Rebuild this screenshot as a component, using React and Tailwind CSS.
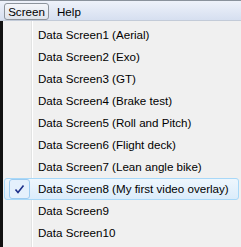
import React from "react"

const items = [
  "Data Screen1 (Aerial)",
  "Data Screen2 (Exo)",
  "Data Screen3 (GT)",
  "Data Screen4 (Brake test)",
  "Data Screen5 (Roll and Pitch)",
  "Data Screen6 (Flight deck)",
  "Data Screen7 (Lean angle bike)",
  "Data Screen8 (My first video overlay)",
  "Data Screen9",
  "Data Screen10",
]

function Check() {
  return (
    <svg width="11" height="11" viewBox="0 0 11 11">
      <path d="M1.5 5.5 L4 8.5 L9.5 1.5" fill="none" stroke="#1c2f8a" strokeWidth="1.6" />
    </svg>
  )
}

export default function App() {
  return (
    <div
      className="w-[241px] h-[247px] overflow-hidden bg-[#f0f0f0] text-[11.6px] text-black"
      style={{ fontFamily: '"Liberation Sans", Arial, sans-serif' }}
    >
      {/* menu bar */}
      <div className="h-[21px] border-t border-t-[#8a929c] border-b border-b-[#c3cbd8] bg-gradient-to-b from-[#eef2fa] to-[#d6dff0] flex items-start pl-[4px] pt-[2px]">
        <div className="h-[17px] w-[45px] rounded-[3px] border border-[#8d949c] bg-gradient-to-b from-[#f4f6fa] to-[#dfe4ec] flex items-center justify-center leading-none">
          Screen
        </div>
        <div className="h-[17px] px-[8px] flex items-center leading-none">Help</div>
      </div>

      <div className="flex h-[226px]">
        <div className="w-[3px] bg-[#111]" />
        <div className="relative flex-1 pt-[3px]">
          <div className="absolute left-[28px] top-0 bottom-0 w-[2px] border-l border-l-[#e2e3e3] border-r border-r-white" />
          {items.map((label, i) => {
            const on = i === 7
            return (
              <div
                key={label}
                className={
                  "relative h-[22px] ml-[1px] mr-[2px] flex items-center " +
                  (on
                    ? "rounded-[3px] border border-[#a8d8f8] bg-gradient-to-b from-[#eef6fd] to-[#dbecfb]"
                    : "border border-transparent")
                }
              >
                <div className="w-[26px] flex items-center justify-center h-full">
                  {on && (
                    <div className="ml-[2px] w-[21px] h-[20px] rounded-[3px] border border-[#9ccbf0] bg-[#e4f0fc] flex items-center justify-center">
                      <Check />
                    </div>
                  )}
                </div>
                <span className="ml-[7px] leading-none whitespace-nowrap">{label}</span>
              </div>
            )
          })}
        </div>
      </div>
    </div>
  )
}
